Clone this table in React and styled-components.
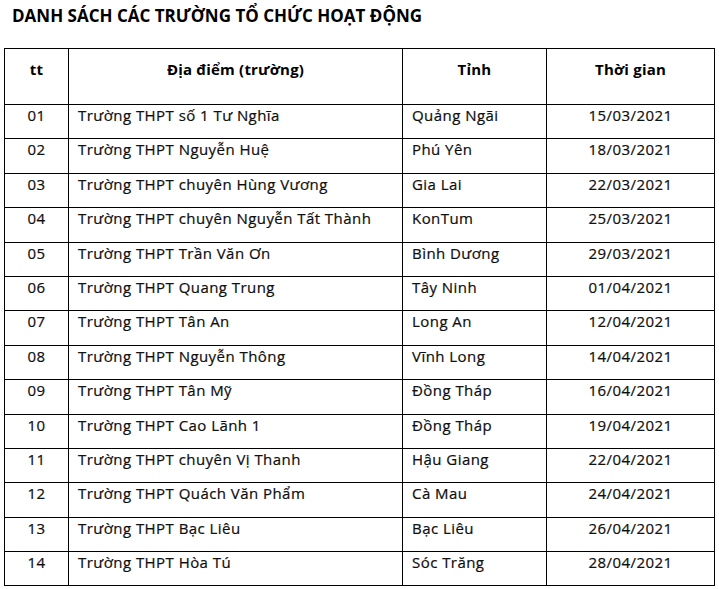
import React from 'react'
import styled, { createGlobalStyle } from 'styled-components'

const GlobalStyle = createGlobalStyle`
  html, body {
    margin: 0;
    padding: 0;
    background: #ffffff;
  }
  body {
    font-family: "Open Sans", "Liberation Sans", sans-serif;
    color: #000000;
  }
`;

const Page = styled.div`
  width: 719px;
  height: 589px;
  padding: 4px 0 0 4px;
  box-sizing: border-box;
  overflow: hidden;
`;

const Title = styled.h1`
  margin: 0 0 0 8px;
  font-size: 17px;
  font-weight: 700;
  line-height: 24px;
`;

const Table = styled.table`
  margin-top: 20px;
  border-collapse: collapse;
  table-layout: fixed;
  width: 710px;
`;

const HeadCell = styled.th`
  border: 1px solid #000;
  height: 56px;
  box-sizing: border-box;
  padding: 10px 0 0;
  vertical-align: top;
  font-size: 15px;
  font-weight: 700;
  text-align: center;
  letter-spacing: 0.2px;
`;

const Cell = styled.td`
  border: 1px solid #000;
  height: 34.4px;
  box-sizing: border-box;
  padding: 0 ${p => (p.$align === 'left' ? '0 0 9px' : '0 0 0')};
  vertical-align: top;
  font-size: 15px;
  line-height: 20px;
  letter-spacing: 0.45px;
  color: #111;
  text-align: ${p => p.$align || 'center'};
  white-space: nowrap;
  -webkit-text-stroke: 0.2px #000;
`;

const rows = [
  ['01', 'Trường THPT số 1 Tư Nghĩa', 'Quảng Ngãi', '15/03/2021'],
  ['02', 'Trường THPT Nguyễn Huệ', 'Phú Yên', '18/03/2021'],
  ['03', 'Trường THPT chuyên Hùng Vương', 'Gia Lai', '22/03/2021'],
  ['04', 'Trường THPT chuyên Nguyễn Tất Thành', 'KonTum', '25/03/2021'],
  ['05', 'Trường THPT Trần Văn Ơn', 'Bình Dương', '29/03/2021'],
  ['06', 'Trường THPT Quang Trung', 'Tây Ninh', '01/04/2021'],
  ['07', 'Trường THPT Tân An', 'Long An', '12/04/2021'],
  ['08', 'Trường THPT Nguyễn Thông', 'Vĩnh Long', '14/04/2021'],
  ['09', 'Trường THPT Tân Mỹ', 'Đồng Tháp', '16/04/2021'],
  ['10', 'Trường THPT Cao Lãnh 1', 'Đồng Tháp', '19/04/2021'],
  ['11', 'Trường THPT chuyên Vị Thanh', 'Hậu Giang', '22/04/2021'],
  ['12', 'Trường THPT Quách Văn Phẩm', 'Cà Mau', '24/04/2021'],
  ['13', 'Trường THPT Bạc Liêu', 'Bạc Liêu', '26/04/2021'],
  ['14', 'Trường THPT Hòa Tú', 'Sóc Trăng', '28/04/2021'],
]

const App = () => {
  return (
    <Page>
      <GlobalStyle />
      <Title>DANH SÁCH CÁC TRƯỜNG TỔ CHỨC HOẠT ĐỘNG</Title>
      <Table>
        <colgroup>
          <col style={{ width: 64 }} />
          <col style={{ width: 334 }} />
          <col style={{ width: 144 }} />
          <col style={{ width: 168 }} />
        </colgroup>
        <thead>
          <tr>
            <HeadCell>tt</HeadCell>
            <HeadCell>Địa điểm (trường)</HeadCell>
            <HeadCell>Tỉnh</HeadCell>
            <HeadCell>Thời gian</HeadCell>
          </tr>
        </thead>
        <tbody>
          {rows.map(r => (
            <tr key={r[0]}>
              <Cell>{r[0]}</Cell>
              <Cell $align="left">{r[1]}</Cell>
              <Cell $align="left">{r[2]}</Cell>
              <Cell>{r[3]}</Cell>
            </tr>
          ))}
        </tbody>
      </Table>
    </Page>
  )
}

export default App
